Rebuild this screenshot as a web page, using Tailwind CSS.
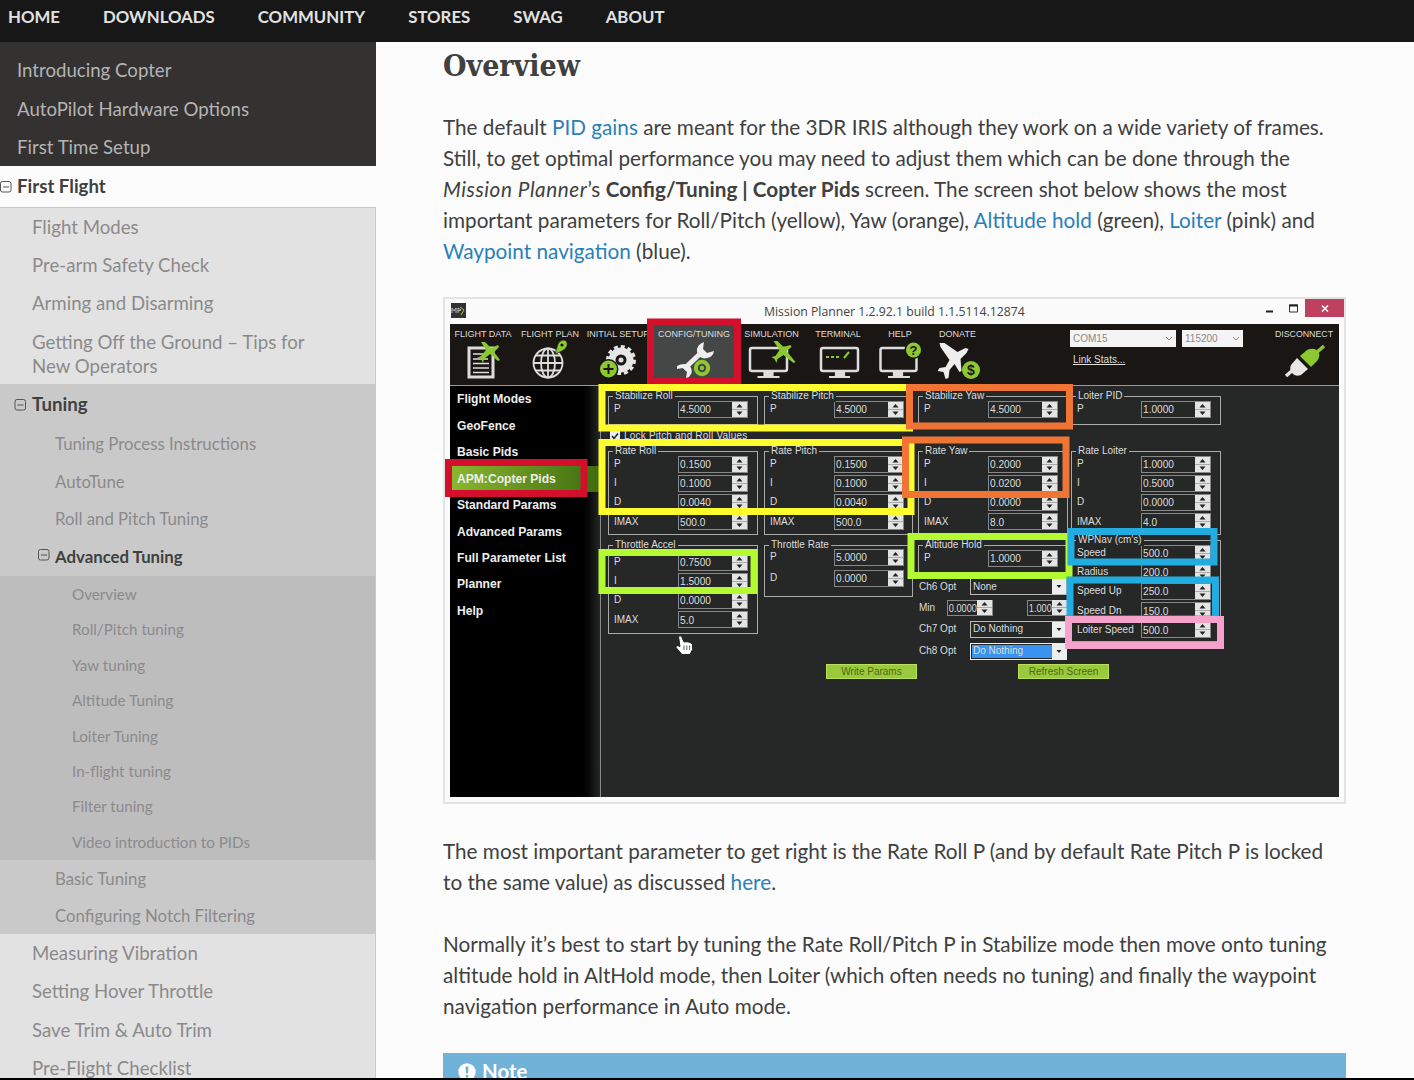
<!DOCTYPE html>
<html lang="en">
<head>
<meta charset="utf-8">
<title>Copter Tuning</title>
<script src="https://cdn.jsdelivr.net/npm/@tailwindcss/browser@4"></script>
</head>
<body class="h-[1080px] overflow-hidden bg-[#fcfcfd] font-['Lato',sans-serif] text-[#404040]">
<div class="flex h-[1080px] flex-col overflow-hidden">
  <nav class="flex h-[42px] shrink-0 gap-[43px] bg-[#171717] pl-2 text-[16.800px] leading-[33px] font-bold text-[#e2e2e2]">
    <a>HOME</a><a>DOWNLOADS</a><a>COMMUNITY</a><a>STORES</a><a>SWAG</a><a>ABOUT</a>
  </nav>
  <div class="flex h-[1036px] shrink-0 overflow-hidden">
    <aside class="w-[376px] shrink-0 text-[18.650px] text-[#8b8a8b]">
      <div class="flex h-[124px] flex-col bg-[#343131] pt-[9px] pl-[17px] text-[#b5b4b5]">
        <a class="h-[39px] leading-[39px]">Introducing Copter</a>
        <a class="h-[38px] leading-[38px]">AutoPilot Hardware Options</a>
        <a class="h-[38px] leading-[38px]">First Time Setup</a>
      </div>
      <div class="flex h-[41px] items-center gap-[5px] pt-px font-bold text-[#404040]">
        <svg class="h-3 w-3" viewBox="0 0 12 12" fill="none" stroke="#555"><rect x=".5" y=".5" width="10.500" height="10.500" rx="2"/><path d="M3 6h6"/></svg>First Flight
      </div>
      <div class="border-t border-r border-[#c9c9c9] bg-[#e3e2e3]">
        <div class="flex flex-col pl-8">
          <a class="h-[38px] leading-[38px]">Flight Modes</a>
          <a class="h-[38px] leading-[38px]">Pre-arm Safety Check</a>
          <a class="h-[39px] leading-[39px]">Arming and Disarming</a>
          <a class="h-[61px] pt-[8px] leading-[23.500px]">Getting Off the Ground – Tips for<br>New Operators</a>
        </div>
        <div class="flex flex-col bg-[#c9c9c9] text-[16.800px]">
          <div class="flex h-[41px] items-center gap-[5px] pt-px pl-[14px] text-[18.650px] font-bold text-[#404040]">
            <svg class="h-3 w-[13px]" viewBox="0 0 12 12" fill="none" stroke="#555"><rect x=".5" y=".5" width="10.500" height="10.500" rx="2"/><path d="M3 6h6"/></svg>Tuning
          </div>
          <a class="h-[38px] pl-[55px] leading-[38px]">Tuning Process Instructions</a>
          <a class="h-[37px] pl-[55px] leading-[37px]">AutoTune</a>
          <a class="h-[37px] pl-[55px] leading-[37px]">Roll and Pitch Tuning</a>
          <div class="flex h-[39px] items-center gap-[5px] pl-[38px] font-bold text-[#404040]">
            <svg class="-mt-1 h-3 w-3" viewBox="0 0 12 12" fill="none" stroke="#555"><rect x=".5" y=".5" width="10.500" height="10.500" rx="2"/><path d="M3 6h6"/></svg>Advanced Tuning
          </div>
          <div class="flex h-[284px] flex-col bg-[#bdbdbe] pt-px pl-[72px] text-[15.200px] leading-[35.400px]">
            <a>Overview</a><a>Roll/Pitch tuning</a><a>Yaw tuning</a><a>Altitude Tuning</a><a>Loiter Tuning</a><a>In-flight tuning</a><a>Filter tuning</a><a>Video introduction to PIDs</a>
          </div>
          <a class="h-[37px] pl-[55px] leading-[37px]">Basic Tuning</a>
          <a class="h-[37px] pl-[55px] leading-[37px]">Configuring Notch Filtering</a>
        </div>
        <div class="flex flex-col pl-8 leading-[38.300px]">
          <a>Measuring Vibration</a><a>Setting Hover Throttle</a><a>Save Trim &amp; Auto Trim</a><a>Pre-Flight Checklist</a>
        </div>
      </div>
    </aside>

    <main class="w-[970px] pl-[67px]">
      <h2 class="h-[69.500px] pt-[4px] font-['Roboto_Slab','DejaVu_Serif',serif] text-[30px] leading-[40px] font-bold [font-stretch:condensed]">Overview</h2>
      <p class="text-[20.730px] leading-[31.100px] whitespace-nowrap">The default <a class="text-[#2980b9]">PID gains</a> are meant for the 3DR IRIS although they work on a wide variety of frames.<br>Still, to get optimal performance you may need to adjust them which can be done through the<br><em class="tracking-[.55px]">Mission Planner</em>’s <b>Config/Tuning | Copter Pids</b> screen. The screen shot below shows the most<br>important parameters for Roll/Pitch (yellow), Yaw (orange), <a class="text-[#2980b9]">Altitude hold</a> (green), <a class="text-[#2980b9]">Loiter</a> (pink) and<br><a class="text-[#2980b9]">Waypoint navigation</a> (blue).</p>

      <figure class="relative mt-[30px] h-[507px] w-[903px] border-2 border-[#e3e3e6] bg-[#fbfbfc] font-['Liberation_Sans',sans-serif]">
        <div class="flex h-[25.500px] items-start pl-[6px]">
          <svg class="mt-[4px] h-[15px] w-[15px] shrink-0" viewBox="0 0 15 15"><rect width="15" height="15" fill="#333"/><path d="M1 10V5l2 3 2-3v5M7 10V5l3 2-3 1" stroke="#bbb" fill="none"/><path d="M9 4l4 3-3 5" stroke="#9c3" fill="none"/></svg>
          <div class="w-[830px] pl-[298px] font-['Open_Sans',sans-serif] text-[12.250px] leading-[26px] whitespace-nowrap text-[#444]">Mission Planner 1.2.92.1 build 1.1.5114.12874</div>
          <svg class="-ml-[30px] h-[18px] w-[78px] shrink-0" viewBox="1261 298 78 18"><path d="M1261 310.500h7" stroke="#222" stroke-width="2"/><path d="M1284.500 304v7h8v-7z" fill="none" stroke="#333"/><path d="M1284 304.500h9" stroke="#222" stroke-width="2"/><path d="M1300 298h39v18h-39z" fill="#c0405f"/><path d="M1317 304.500l6 6m0-6l-6 6" stroke="#fff" stroke-width="1.600"/></svg>
        </div>

        <div class="ml-[5px] h-[473px] w-[889px] overflow-hidden bg-[#262828] text-[#ddd]">
          <div class="flex h-[62px] border-b border-[#999] bg-[#1a1614] pt-[4px] text-center text-[9px] leading-3 whitespace-nowrap">
            <div class="w-[66px]">FLIGHT DATA
              <svg class="mx-auto h-10 w-12" viewBox="458 341 48 40"><path d="M468 349h24v29h-24z" fill="none" stroke="#ddd" stroke-width="3"/><path d="M472 355h11m-11 5h15m-15 4.500h16m-16 4.500h16m-16 4.500h16" stroke="#ddd" stroke-width="1.600"/><path d="M480 343l4 0 6 6 7-3 1 2-5 5 6 8-2 1-8-7-6 5-1 4-2-4-4-1 4-2 5-6z" fill="#8cc832"/></svg></div>
            <div class="w-[68px]">FLIGHT PLAN
              <svg class="mx-auto h-10 w-12" viewBox="526 341 48 40"><g fill="none" stroke="#ddd" stroke-width="1.800"><circle cx="548" cy="364" r="14.500"/><ellipse cx="548" cy="364" rx="7" ry="14.500"/><path d="M548 350v29M534 364h28M536 356.500h24M536 371.500h24"/></g><path d="M555 355l3-10q2-4 6-4 4 1 3 6-1 3-5 5z" fill="#8cc832" stroke="#1a1614" stroke-width=".6"/><circle cx="562" cy="346" r="1.600" fill="#1a1614"/></svg></div>
            <div class="w-[68px]">INITIAL SETUP
              <svg class="mx-auto h-10 w-12" viewBox="594 341 48 40"><circle cx="621" cy="361" r="9" fill="none" stroke="#e6e6e6" stroke-width="7"/><circle cx="621" cy="361" r="13.500" fill="none" stroke="#e6e6e6" stroke-width="3" stroke-dasharray="4 3"/><circle cx="621" cy="361" r="2.500" fill="#ddd"/><circle cx="608.500" cy="370" r="10" fill="#1a1614"/><circle cx="608.500" cy="370" r="8.500" fill="#8cc832"/><path d="M608.500 365v10m-5-5h10" stroke="#1a1614" stroke-width="2"/></svg></div>
            <div class="-mt-1 w-[84px] bg-[#454747] pt-1">CONFIG/TUNING
              <svg class="mx-auto h-10 w-12" viewBox="670 341 48 40"><path d="M684 370l18-17" stroke="#eee" stroke-width="5"/><path d="M704 343q-8 3-7 10 3 8 10 6 6-1 7-7l-7 2-4-4zM677 367q7-4 13 0 4 6-1 11l-3 1 1-6-4-4-6 1z" fill="#eee"/><circle cx="702" cy="369" r="8.500" fill="#454747"/><circle cx="702" cy="369" r="6.200" fill="#454747" stroke="#8cc832" stroke-width="4"/><circle cx="702" cy="369" r="2.200" fill="#8cc832"/></svg></div>
            <div class="w-[71px]">SIMULATION
              <svg class="mx-auto h-10 w-12" viewBox="747.500 341 48 40"><rect x="749.500" y="349" width="37" height="23" rx="2" fill="none" stroke="#ddd" stroke-width="2.500"/><path d="M757 378h22M764 376h8v-4h-8z" stroke="#ddd" stroke-width="2.200" fill="#ddd"/><path d="M773 342l4 0 6 6 7-2 1 2-5 4 9 11-2 1-10-8-6 4-1 4-2-4-3-2 4-1 4-6z" fill="#8cc832"/></svg></div>
            <div class="w-[62px]">TERMINAL
              <svg class="mx-auto h-10 w-12" viewBox="814 341 48 40"><rect x="821" y="349" width="37" height="23" rx="2" fill="none" stroke="#ddd" stroke-width="2.500"/><path d="M829 378h21M836 376h8v-4h-8z" stroke="#ddd" stroke-width="2.200" fill="#ddd"/><path d="M826 358h3m2 0h3m2 0h3m5 1l5-6" stroke="#8cc832" stroke-width="2"/></svg></div>
            <div class="w-[62px]">HELP
              <svg class="mx-auto h-10 w-12" viewBox="876 341 48 40"><rect x="880.500" y="349" width="36" height="23" rx="2" fill="none" stroke="#ddd" stroke-width="2.500"/><path d="M888 378h22M894 376h8v-4h-8z" stroke="#ddd" stroke-width="2.200" fill="#ddd"/><circle cx="913.500" cy="351" r="9" fill="#1a1614"/><circle cx="913.500" cy="351" r="7.500" fill="#8cc832"/><text x="913.500" y="355.500" font-size="13" font-weight="bold" text-anchor="middle" fill="#1a1614">?</text></svg></div>
            <div class="w-[53px]">DONATE
              <svg class="mx-auto h-10 w-12" viewBox="933.500 341 48 40"><path d="M939 344l5 0 13 9 8-4 3 1-2 4-6 6 1 12-2 1-5-8-5 6-1 8-3 1-2-7-6-1 2-3 6-1 4-7-9-13z" fill="#eee"/><circle cx="970.500" cy="371" r="9" fill="#8cc832"/><text x="970.500" y="376" font-size="14" font-weight="bold" text-anchor="middle" fill="#1a1614">$</text></svg></div>
            <div class="ml-[86px] w-[174px] pt-[2px] text-left text-[10px]">
              <div class="flex gap-[6px] text-[#888]">
                <div class="flex h-[17px] w-[106px] items-center justify-between bg-[#f4f4f4] px-[3px]">COM15<svg class="h-2 w-2" viewBox="0 0 8 8" fill="none" stroke="#888"><path d="M1 2l3 3 3-3"/></svg></div>
                <div class="flex h-[17px] w-[61px] items-center justify-between bg-[#f4f4f4] px-[3px]">115200<svg class="h-2 w-2" viewBox="0 0 8 8" fill="none" stroke="#888"><path d="M1 2l3 3 3-3"/></svg></div>
              </div>
              <a class="mt-[7px] ml-[3px] block text-[10px] underline">Link Stats...</a>
            </div>
            <div class="ml-[26px] w-[68px] text-[8.800px]">DISCONNECT
              <svg class="mx-auto h-10 w-12" viewBox="1280 341 48 40"><path d="M1286 377l8-7" stroke="#e6e6e6" stroke-width="3.500"/><path d="M1291 366l6-7 11 11-7 6q-6 2-9-2-3-4-1-8z" fill="#e6e6e6"/><path d="M1300 357l7-6q7-3 11 1 3 5-1 10l-6 6z" fill="#8cc832"/><path d="M1316 354l8-7" stroke="#8cc832" stroke-width="3.500"/></svg></div>
          </div>

          <div class="flex h-[411px]">
            <div class="flex w-[151px] shrink-0 flex-col border-r border-[#8a8a8a] bg-linear-to-r from-black from-85% to-[#262828] text-[12.100px] leading-[26.400px] font-bold whitespace-nowrap text-[#eee]">
              <a class="pl-[7px]">Flight Modes</a><a class="pl-[7px]">GeoFence</a><a class="pl-[7px]">Basic Pids</a>
              <a class="bg-linear-to-r from-[#8ab82f] to-[#3f6d10] pl-[7px]">APM:Copter Pids</a>
              <a class="pl-[7px]">Standard Params</a><a class="pl-[7px]">Advanced Params</a><a class="pl-[7px]">Full Parameter List</a><a class="pl-[7px]">Planner</a><a class="pl-[7px]">Help</a>
            </div>
            <div class="text-[10px] leading-3 whitespace-nowrap">
              <div class="flex h-[278px] pl-[7px]">
                <div class="w-[150px] pt-[10px]">
                  <div data-legend="Stabilize Roll" data-rows="P:4.5000" class="h-[29px] border border-[#aaa] pt-[2px]"></div>
                  <div class="flex h-[26px] items-center gap-1 pb-[5px] pl-[2px]"><svg class="h-[10px] w-[10px]" viewBox="0 0 10 10"><rect width="10" height="10" fill="#eee"/><path d="M2 5l2 2.500 4-5" fill="none" stroke="#222" stroke-width="1.500"/></svg><span class="tracking-[.2px]">Lock Pitch and Roll Values</span></div>
                  <div data-legend="Rate Roll" data-rows="P:0.1500,I:0.1000,D:0.0040,IMAX:500.0" class="h-[84px] border border-[#aaa] pt-[2px]"></div>
                  <div data-legend="Throttle Accel" data-rows="P:0.7500,I:1.5000,D:0.0000,IMAX:5.0" class="mt-[10px] h-[89px] border border-[#aaa] pt-[2px] [&>div:first-child]:mb-[6px]"></div>
                </div>
                <div class="ml-[6px] w-[149px] pt-[10px]">
                  <div data-legend="Stabilize Pitch" data-rows="P:4.5000" class="h-[29px] border border-[#aaa] pt-[2px]"></div>
                  <div data-legend="Rate Pitch" data-rows="P:0.1500,I:0.1000,D:0.0040,IMAX:500.0" class="mt-[26px] h-[84px] border border-[#aaa] pt-[2px]"></div>
                  <div data-legend="Throttle Rate" data-rows="P:5.0000,D:0.0000" class="mt-[10px] h-[52px] border border-[#aaa] pt-[2px] [&>div:first-child]:mb-px [&>div:last-child]:mt-[2px]"></div>
                </div>
                <div class="ml-[5px] w-[150px] pt-[10px]">
                  <div data-legend="Stabilize Yaw" data-rows="P:4.5000" class="h-[29px] border border-[#aaa] pt-[2px]"></div>
                  <div data-legend="Rate Yaw" data-rows="P:0.2000,I:0.0200,D:0.0000,IMAX:8.0" class="mt-[26px] h-[84px] border border-[#aaa] pt-[2px]"></div>
                  <div data-legend="Altitude Hold" data-rows="P:1.0000" class="mt-[10px] h-[29px] border border-[#aaa] pt-[2px]"></div>
                  <div class="mt-[2px] flex h-[21px] items-center"><span class="w-[52px] pl-px">Ch6 Opt</span><span class="flex h-[17px] w-[97px] items-center justify-between border border-[#bbb] pl-[2px]">None<i data-drop></i></span></div>
                  <div class="flex h-[21px] items-center"><span class="w-[30px] pl-px">Min</span><span data-small="0.0000" class="flex h-[16px] w-[46px] items-center justify-between border border-[#888]"></span><span data-small="1.000" class="ml-[34px] flex h-[16px] w-[42px] items-center justify-between border border-[#888]"></span></div>
                  <div class="flex h-[22px] items-center"><span class="w-[52px] pl-px">Ch7 Opt</span><span class="flex h-[17px] w-[97px] items-center justify-between border border-[#bbb] pl-[2px]">Do Nothing<i data-drop></i></span></div>
                  <div class="flex h-[22px] items-center"><span class="w-[52px] pl-px">Ch8 Opt</span><span class="flex h-[17px] w-[97px] items-center justify-between border border-[#eee] pl-px"><span class="h-[13px] w-[80px] bg-[#3a93f0] pl-px">Do Nothing</span><i data-drop></i></span></div>
                </div>
                <div class="ml-[3px] w-[150px] pt-[10px]">
                  <div data-legend="Loiter PID" data-rows="P:1.0000" class="h-[29px] border border-[#aaa] pt-[2px]"></div>
                  <div data-legend="Rate Loiter" data-rows="P:1.0000,I:0.5000,D:0.0000,IMAX:4.0" class="mt-[26px] h-[84px] border border-[#aaa] pt-[2px]"></div>
                  <div data-legend="WPNav (cm's)" data-rows="Speed:500.0,Radius:200.0,Speed Up:250.0,Speed Dn:150.0,Loiter Speed:500.0" class="mt-[5px] h-[102px] border border-[#aaa] pt-[2px]"></div>
                </div>
              </div>
              <div class="flex gap-[101px] pl-[225px] text-center leading-[14px] text-[#4c6a18]">
                <button class="h-[15px] w-[91px] border border-[#b8e05a] bg-[#9bc93c]">Write Params</button>
                <button class="h-[15px] w-[91px] border border-[#b8e05a] bg-[#9bc93c]">Refresh Screen</button>
              </div>
            </div>
          </div>
        </div>

        <svg class="absolute -top-[2px] -left-[2px] h-[507px] w-[903px]" viewBox="443 297 903 507" fill="none" stroke-width="7">
          <path d="M650.500 322h87v59.500h-87zM448.500 462.500H584v31H448.500z" stroke="#d40f2c"/>
          <path d="M602 387.500h307.500V428H602zM602 442.500h309v69H602z" stroke="#fcfc2e"/>
          <path d="M909.500 387.500h160V426h-160zM905.500 440H1066v54.500H905.500z" stroke="#f07535"/>
          <path d="M602 552.500h152v38H602zM911 536.500h158v39H911z" stroke="#b4fa32"/>
          <path d="M1071 531.500h143V562h-143zM1070 580h145.500v39H1070z" stroke="#22acdf"/>
          <path d="M1068.500 619.500h152v26h-152z" stroke="#f5a3cb"/>
          <path d="M678.500 636.500q2-2 3.500 1l2 4.500q6-1 8.500 2.500v5l-2.500 5h-8l-6-7q0-3 4-1z" fill="#fff" stroke="#222" stroke-width="1"/><path d="M684 645.500v4.500m2.800-4.500v4.500m2.800-4.500v4.500" stroke="#333" stroke-width=".8"/>
        </svg>
      </figure>

      <p class="mt-[32px] text-[20.730px] leading-[31px] whitespace-nowrap">The most important parameter to get right is the Rate Roll P (and by default Rate Pitch P is locked<br>to the same value) as discussed <a class="text-[#2980b9]">here</a>.</p>
      <p class="mt-[31px] text-[20.730px] leading-[31px] whitespace-nowrap">Normally it’s best to start by tuning the Rate Roll/Pitch P in Stabilize mode then move onto tuning<br>altitude hold in AltHold mode, then Loiter (which often needs no tuning) and finally the waypoint<br>navigation performance in Auto mode.</p>
      <div class="mt-[31px] flex h-[40px] w-[903px] gap-[6px] bg-[#70b2d8] pt-[3px] pl-[15px] text-[20.400px] leading-[31px] font-bold text-white">
        <svg class="mt-[7px] h-[18px] w-[18px]" viewBox="0 0 18 18"><circle cx="9" cy="9" r="8.700" fill="#fff"/><path d="M7.500 3.500h3l-.5 7H8zM7.700 12h2.600v2.500H7.700z" fill="#70b2d8"/></svg>Note
      </div>
    </main>
  </div>
  <div class="h-[2px] shrink-0 bg-black"></div>
</div>
<script>
const spin = '<svg class="h-[15px] w-[15px] shrink-0" viewBox="0 0 15 15"><path fill="#e4e4e4" d="M0 0h15v15H0z"/><path stroke="#aaa" d="M0 7.500h15"/><path fill="#222" d="M4.500 5.500l3-3.500 3 3.500zM4.500 9.500l3 3.500 3-3.500z"/></svg>';
const value = v => `<span class="origin-left scale-x-[.88] text-[11.500px]">${v}</span>`;
document.querySelectorAll('[data-legend]').forEach(g => {
  g.innerHTML = `<div class="-mt-[2px] mb-[2px] flex h-0 items-center pl-1"><span class="-translate-y-px bg-[#262828] px-[2px]">${g.dataset.legend}</span></div>` +
    g.dataset.rows.split(',').map(r => {
      const [k, v] = r.split(':');
      return `<div class="flex h-[19.200px] items-center"><span class="w-[69px] pl-[5px]">${k}</span><span class="flex h-[17px] w-[70px] items-center justify-between border border-[#888] pl-px">${value(v)}${spin}</span></div>`;
    }).join('');
});
document.querySelectorAll('[data-small]').forEach(s => { s.innerHTML = `<span class="w-[22px] origin-left scale-x-[.8] pl-px text-[11.500px]">${s.dataset.small}</span>${spin}`; });
document.querySelectorAll('[data-drop]').forEach(d => { d.outerHTML = '<svg class="h-[15px] w-[14px] shrink-0" viewBox="0 0 14 15"><path fill="#eee" d="M0 0h14v15H0z"/><path fill="#222" d="M4.500 6h5L7 9z"/></svg>'; });
</script>
</body>
</html>
